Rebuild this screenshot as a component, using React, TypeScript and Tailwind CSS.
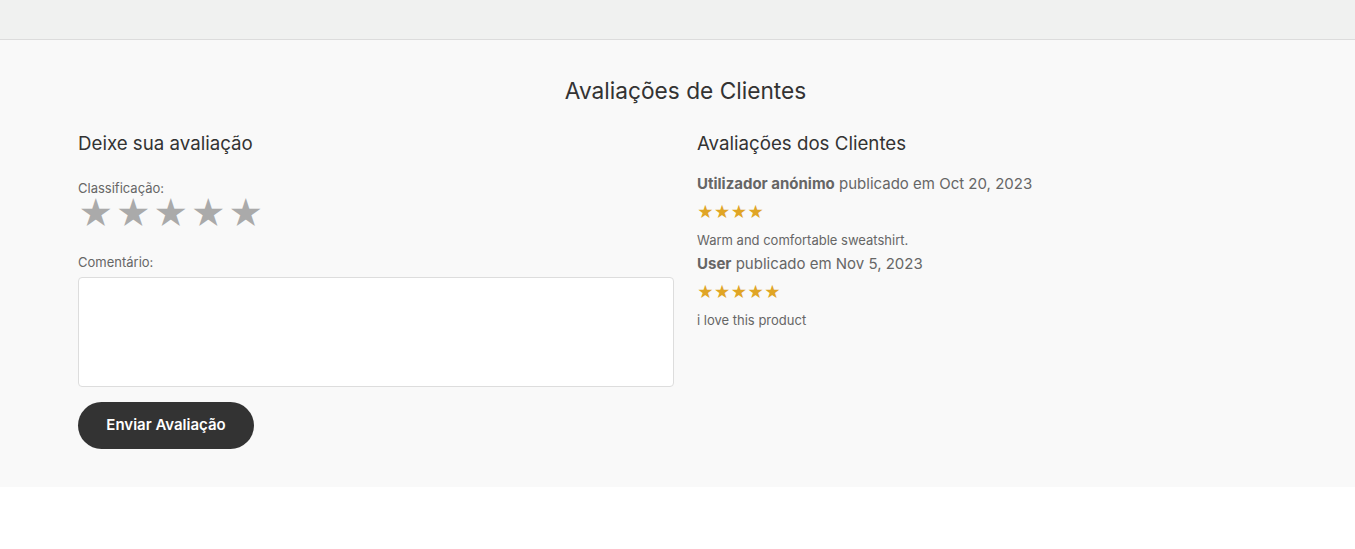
export default function App() {
  const reviews = [
    { user: "Utilizador anónimo", date: "Oct 20, 2023", rating: 4, text: "Warm and comfortable sweatshirt." },
    { user: "User", date: "Nov 5, 2023", rating: 5, text: "i love this product" },
  ];

  return (
    <div className="min-h-[549px] bg-white font-['Inter',sans-serif] text-[#333]">
      <div className="h-10 border-b border-[#dcdcdc] bg-[#f0f1f0]" />
      <section className="bg-[#f9f9f9] pb-[38px] pl-[78px] pr-[62px] pt-[37px]">
        <h2 className="text-center text-[22.7px] leading-[28px] text-[#333]">Avaliações de Clientes</h2>
        <div className="mt-[27px] grid grid-cols-[596px_1fr] gap-[23px]">
          <div>
            <h3 className="text-[18.7px] leading-[24px]">Deixe sua avaliação</h3>
            <label className="mt-[23px] block text-[13px] leading-[18px] text-[#666]">Classificação:</label>
            <div className="flex text-[34px] leading-[34px] text-[#aaa]">
              {[0, 1, 2, 3, 4].map((i) => (
                <span key={i} className="w-[37.5px]">★</span>
              ))}
            </div>
            <label className="mt-[22px] block text-[13px] leading-[18px] text-[#666]">Comentário:</label>
            <textarea className="mt-[6px] block h-[110px] w-full resize-none rounded-[4px] border border-[#ddd] bg-white" />
            <button className="mt-[15px] h-[47px] w-[176px] rounded-full bg-[#333] text-[15px] font-semibold text-white">
              Enviar Avaliação
            </button>
          </div>
          <div>
            <h3 className="text-[18.7px] leading-[24px]">Avaliações dos Clientes</h3>
            <div className="mt-[18px]">
              {reviews.map((r) => (
                <div key={r.user} className="mb-[5px]">
                  <p className="text-[15px] leading-[20px] text-[#666]">
                    <span className="font-bold">{r.user}</span> publicado em {r.date}
                  </p>
                  <div className="mt-[8px] text-[16px] leading-[20px] text-[#e0a526]">
                    {"★".repeat(r.rating)}
                  </div>
                  <p className="mt-[9px] text-[13px] leading-[18px] text-[#666]">{r.text}</p>
                </div>
              ))}
            </div>
          </div>
        </div>
      </section>
    </div>
  );
}
